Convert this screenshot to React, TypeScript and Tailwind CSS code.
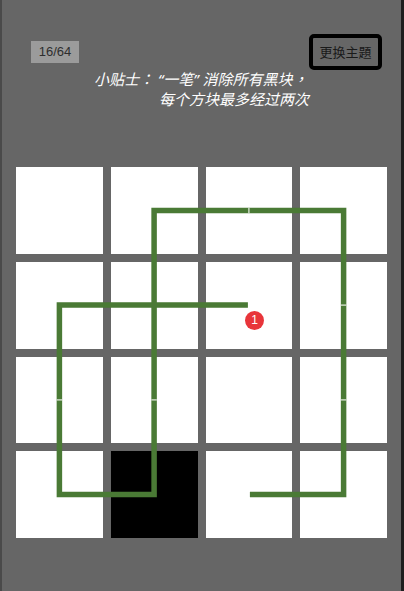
import React from "react";

const cells = Array.from({ length: 16 }, (_, i) => i);

export default function App() {
  const c = [43.4, 138.1, 232.9, 327.6];
  const d = `M${c[2] - 1},${c[1]} L${c[0]},${c[1]} L${c[0]},${c[3]} L${c[1]},${c[3]} L${c[1]},${c[0]} L${c[3]},${c[0]} L${c[3]},${c[3]} L${c[2] + 1},${c[3]}`;
  const ticks: [number, number, "h" | "v"][] = [
    [c[2], c[0], "h"],
    [c[3], c[1], "v"],
    [c[0], c[2], "v"],
    [c[1], c[2], "v"],
    [c[3], c[2], "v"],
  ];
  return (
    <div className="h-[591px] w-full bg-[#666666] border-l-2 border-l-[#4a4a4a] border-r-[3px] border-r-[#1e1e1e] flex flex-col overflow-hidden font-['Noto_Sans_CJK_SC','Noto_Sans',sans-serif]">
      <div className="flex justify-between items-start pt-[34px] h-[70px]">
        <div className="ml-[29px] mt-[7px] w-[48px] h-[22px] bg-[#9b9b9b] text-[#2e2e2e] text-[13px] leading-[22px] text-center font-['Liberation_Sans',Arial,sans-serif]">
          16/64
        </div>
        <div className="mr-[19px] w-[73px] h-[36px] border-[4px] border-black rounded-[5px] flex items-center justify-center text-[13px] text-[#1a1a1a]">
          更换主題
        </div>
      </div>
      <div className="italic text-white text-[15px] leading-[20px] -mt-px [text-spacing-trim:space-all]">
        <div className="pl-[92px] whitespace-nowrap">
          小贴士<span className="font-['Noto_Sans_CJK_TC',sans-serif]">：</span>
          <span className="font-['Noto_Sans',sans-serif]"> “</span>
          一笔
          <span className="font-['Noto_Sans',sans-serif]">” </span>
          消除所有黑块<span className="font-['Noto_Sans_CJK_TC',sans-serif]">，</span>
        </div>
        <div className="pl-[157px] whitespace-nowrap">每个方块最多经过两次</div>
      </div>
      <div className="relative ml-[14px] mt-[58px] w-[371px] h-[371px] grid grid-cols-4 grid-rows-4 gap-[8px]">
        {cells.map((i) => (
          <div key={i} className={i === 13 ? "bg-black" : "bg-white"} />
        ))}
        <svg className="absolute inset-0" width="371" height="371" viewBox="0 0 371 371">
          <path
            d={d}
            fill="none"
            stroke="#4a7a35"
            strokeWidth="5.5"
            strokeLinejoin="miter"
            strokeLinecap="butt"
          />
          {ticks.map(([x, y, o], k) =>
            o === "h" ? (
              <line key={k} x1={x} y1={y - 2.75} x2={x} y2={y + 2.75} stroke="#e8efe4" strokeWidth="1.2" />
            ) : (
              <line key={k} x1={x - 2.75} y1={y} x2={x + 2.75} y2={y} stroke="#e8efe4" strokeWidth="1.2" />
            )
          )}
        </svg>
        <div className="absolute left-[229px] top-[144px] w-[19px] h-[19px] rounded-full bg-[#e8353a] text-white text-[12px] leading-[19px] text-center font-['Liberation_Sans',Arial,sans-serif]">
          1
        </div>
      </div>
    </div>
  );
}
